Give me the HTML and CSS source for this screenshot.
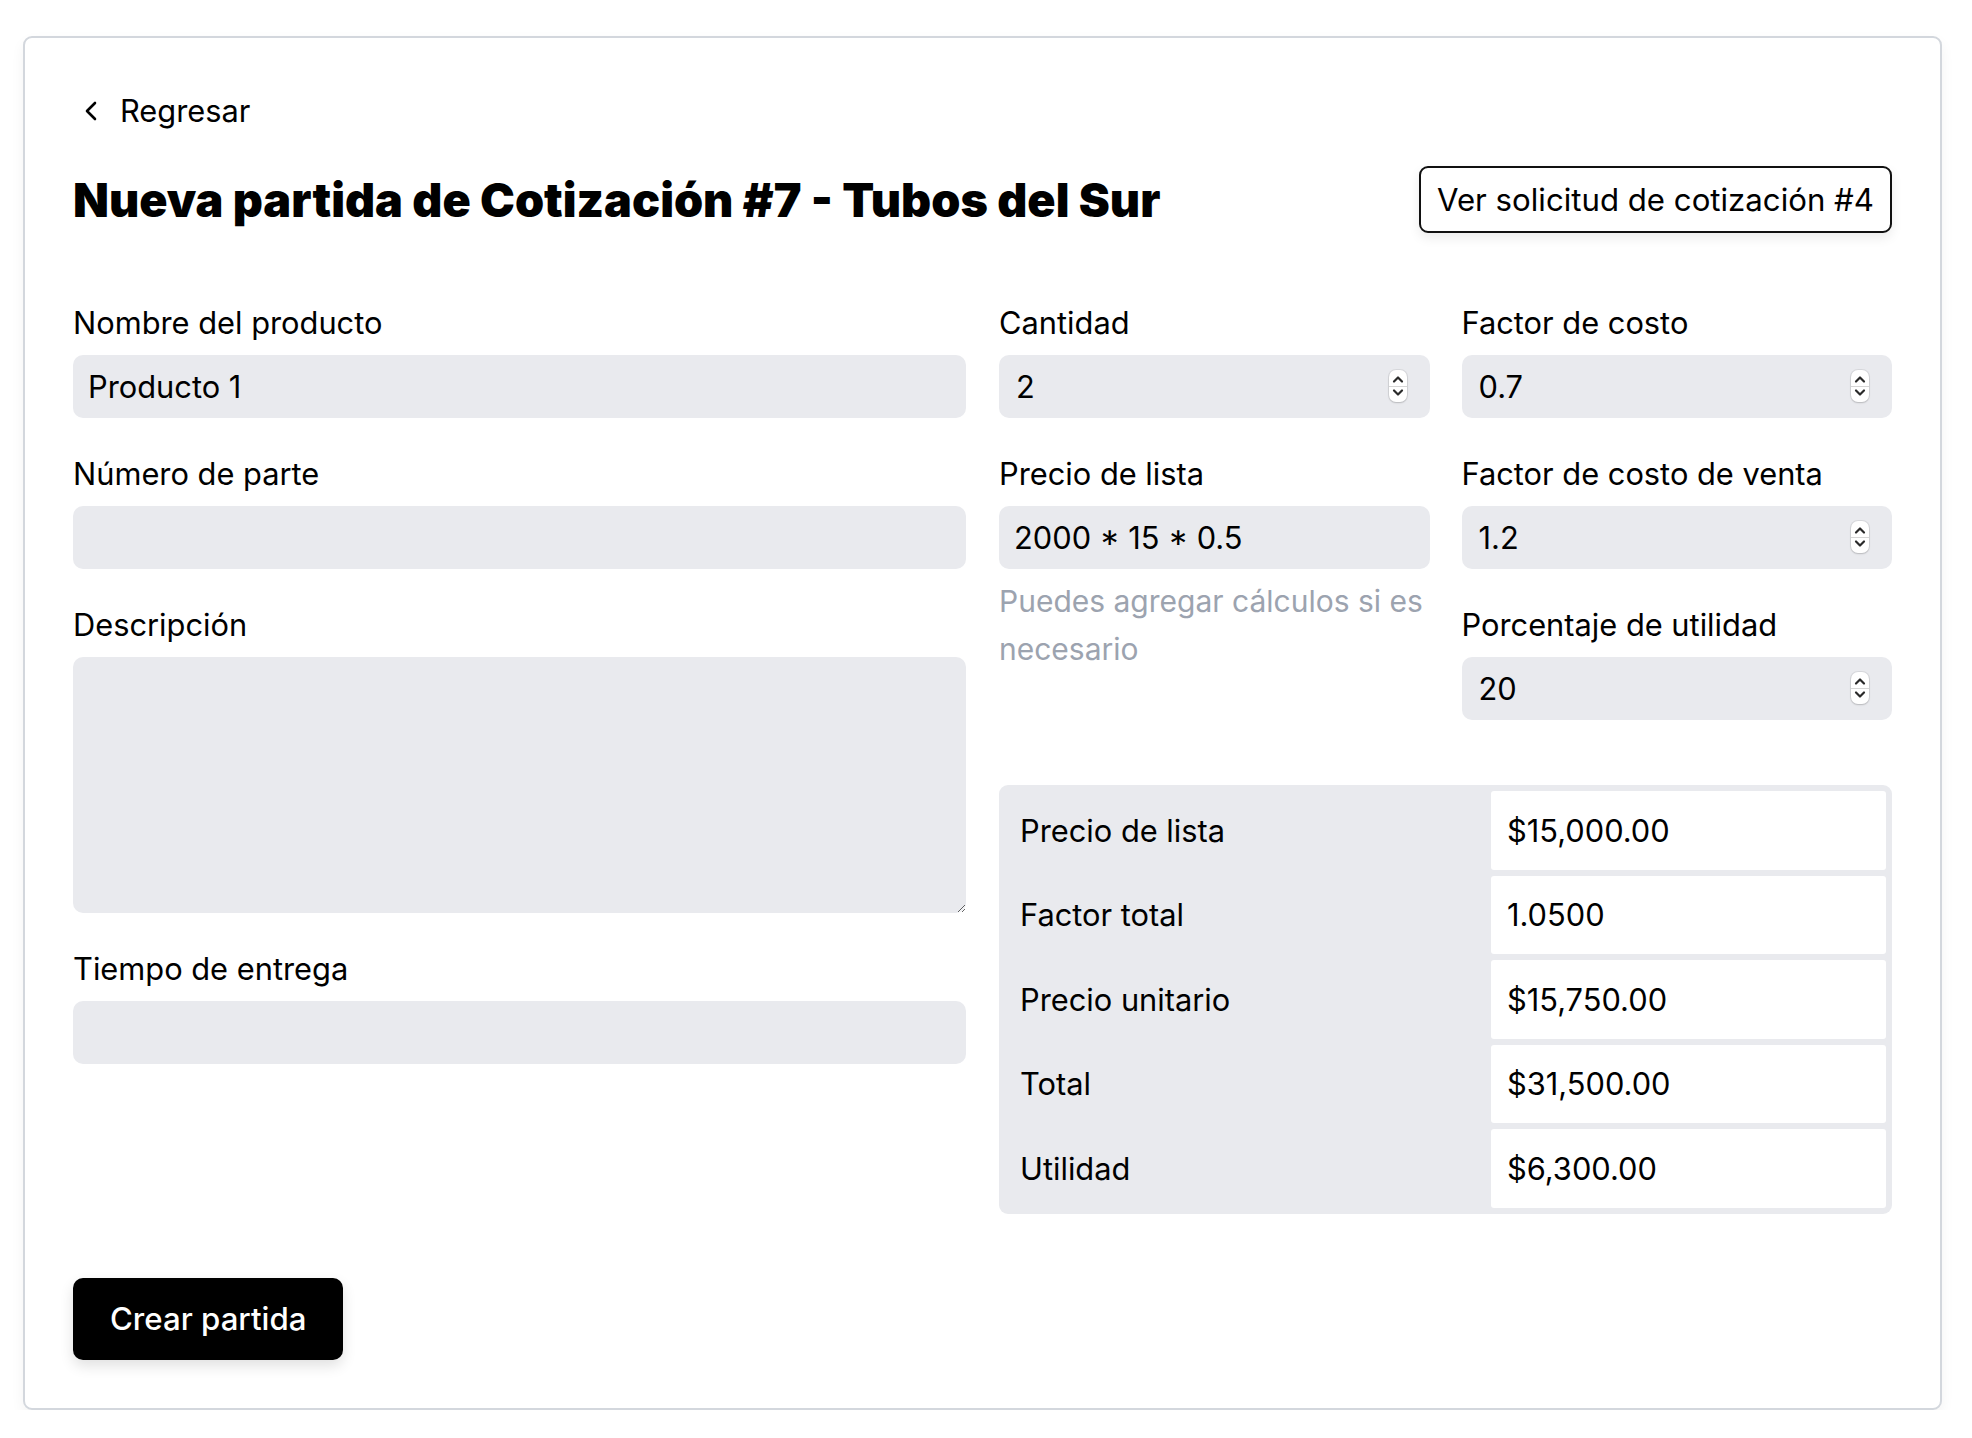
FILE: index.html
```html
<!DOCTYPE html>
<html lang="es">
<head>
<meta charset="utf-8">
<title>Nueva partida</title>
<link rel="stylesheet" href="styles.css">
</head>
<body>
<div class="card">
  <a class="back" href="#">
    <svg class="chev" width="14" height="20" viewBox="0 0 14 20"><path d="M11 2 L3 10 L11 18" fill="none" stroke="#000" stroke-width="2.6" stroke-linecap="round" stroke-linejoin="round"/></svg>
    <span>Regresar</span>
  </a>
  <div class="header">
    <h1 class="title">Nueva partida de Cotización #7 - Tubos del Sur</h1>
    <button class="btn-outline" type="button">Ver solicitud de cotización #4</button>
  </div>

  <div class="grid">
    <div class="col">
      <div class="field">
        <label class="label">Nombre del producto</label>
        <input class="input" type="text" value="Producto 1">
      </div>
      <div class="field">
        <label class="label">Número de parte</label>
        <input class="input" type="text" value="">
      </div>
      <div class="field">
        <label class="label">Descripción</label>
        <textarea class="input textarea"></textarea>
      </div>
      <div class="field">
        <label class="label">Tiempo de entrega</label>
        <input class="input" type="text" value="">
      </div>
    </div>

    <div class="col">
      <div class="subgrid">
        <div class="col">
          <div class="field">
            <label class="label">Cantidad</label>
            <div class="num-wrap">
              <input class="input num" type="number" value="2">
              <span class="spin"><svg width="18" height="32" viewBox="0 0 18 32"><path d="M5 11.5 L9 7.5 L13 11.5" fill="none" stroke="#2a2a2a" stroke-width="2.2" stroke-linecap="round" stroke-linejoin="round"/><path d="M5 20.5 L9 24.5 L13 20.5" fill="none" stroke="#2a2a2a" stroke-width="2.2" stroke-linecap="round" stroke-linejoin="round"/></svg></span>
            </div>
          </div>
          <div class="field">
            <label class="label">Precio de lista</label>
            <input class="input" type="text" value="2000 * 15 * 0.5">
            <p class="help">Puedes agregar cálculos si es necesario</p>
          </div>
        </div>
        <div class="col">
          <div class="field">
            <label class="label">Factor de costo</label>
            <div class="num-wrap">
              <input class="input num" type="number" value="0.7">
              <span class="spin"><svg width="18" height="32" viewBox="0 0 18 32"><path d="M5 11.5 L9 7.5 L13 11.5" fill="none" stroke="#2a2a2a" stroke-width="2.2" stroke-linecap="round" stroke-linejoin="round"/><path d="M5 20.5 L9 24.5 L13 20.5" fill="none" stroke="#2a2a2a" stroke-width="2.2" stroke-linecap="round" stroke-linejoin="round"/></svg></span>
            </div>
          </div>
          <div class="field">
            <label class="label">Factor de costo de venta</label>
            <div class="num-wrap">
              <input class="input num" type="number" value="1.2">
              <span class="spin"><svg width="18" height="32" viewBox="0 0 18 32"><path d="M5 11.5 L9 7.5 L13 11.5" fill="none" stroke="#2a2a2a" stroke-width="2.2" stroke-linecap="round" stroke-linejoin="round"/><path d="M5 20.5 L9 24.5 L13 20.5" fill="none" stroke="#2a2a2a" stroke-width="2.2" stroke-linecap="round" stroke-linejoin="round"/></svg></span>
            </div>
          </div>
          <div class="field">
            <label class="label">Porcentaje de utilidad</label>
            <div class="num-wrap">
              <input class="input num" type="number" value="20">
              <span class="spin"><svg width="18" height="32" viewBox="0 0 18 32"><path d="M5 11.5 L9 7.5 L13 11.5" fill="none" stroke="#2a2a2a" stroke-width="2.2" stroke-linecap="round" stroke-linejoin="round"/><path d="M5 20.5 L9 24.5 L13 20.5" fill="none" stroke="#2a2a2a" stroke-width="2.2" stroke-linecap="round" stroke-linejoin="round"/></svg></span>
            </div>
          </div>
        </div>
      </div>

      <table class="summary">
        <tbody>
          <tr><th>Precio de lista</th><td>$15,000.00</td></tr>
          <tr><th>Factor total</th><td>1.0500</td></tr>
          <tr><th>Precio unitario</th><td>$15,750.00</td></tr>
          <tr><th>Total</th><td>$31,500.00</td></tr>
          <tr><th>Utilidad</th><td>$6,300.00</td></tr>
        </tbody>
      </table>
    </div>
  </div>

  <button class="btn-primary" type="button">Crear partida</button>
</div>
</body>
</html>
```

FILE: styles.css
```css
* { box-sizing: border-box; }

html, body {
  margin: 0;
  background: #ffffff;
}

body {
  padding: 36px 0 0 23px;
  font-family: Inter, "Noto Sans", sans-serif;
  font-size: 30.8px;
  color: #000;
}

.card {
  width: 1919px;
  border: 2px solid #d3d7dd;
  border-radius: 9px;
  padding: 48px;
  background: #fff;
  box-shadow: 0 6px 14px rgba(0, 0, 0, 0.05);
}

.back {
  display: inline-flex;
  align-items: center;
  gap: 22px;
  margin-top: 5px;
  margin-left: 11px;
  height: 40px;
  line-height: 40px;
  color: #000;
  text-decoration: none;
}

.chev { display: block; }

.header {
  display: flex;
  justify-content: space-between;
  align-items: center;
  margin-top: 35px;
  height: 67px;
}

.title {
  margin: 0;
  padding-top: 2px;
  font-size: 46.7px;
  font-weight: 900;
  letter-spacing: 0;
  line-height: 67px;
}

.btn-outline {
  height: 67px;
  padding: 0 16px;
  border: 2px solid #111;
  border-radius: 9px;
  background: #fff;
  font-family: inherit;
  font-size: 31.2px;
  color: #000;
  box-shadow: 0 5px 12px rgba(0, 0, 0, 0.08);
}

.grid {
  display: grid;
  grid-template-columns: 1fr 1fr;
  column-gap: 33px;
  margin-top: 70px;
  align-items: start;
}

.col {
  display: flex;
  flex-direction: column;
  gap: 36px;
}

.subgrid {
  display: grid;
  grid-template-columns: 1fr 1fr;
  column-gap: 32px;
  align-items: start;
}

.field {
  display: flex;
  flex-direction: column;
}

.label {
  display: block;
  line-height: 40px;
  margin-bottom: 12px;
}

.input {
  width: 100%;
  height: 63px;
  border: none;
  border-radius: 10px;
  background: #e9eaee;
  padding: 0 15px;
  font-family: inherit;
  font-size: 30.8px;
  color: #000;
  outline: none;
}

.num { padding-left: 17px; }

.num::-webkit-inner-spin-button,
.num::-webkit-outer-spin-button {
  -webkit-appearance: none;
  margin: 0;
}

.num-wrap { position: relative; }

.spin {
  position: absolute;
  right: 23px;
  top: 15px;
  width: 18px;
  height: 32px;
  border-radius: 7px;
  background: #fff;
  box-shadow: 0 0 0 1px rgba(0, 0, 0, 0.07), 0 1px 2px rgba(0, 0, 0, 0.15);
  display: block;
}

.spin::after {
  content: "";
  position: absolute;
  left: 0;
  right: 0;
  top: 15.5px;
  height: 1px;
  background: #d6d6d6;
}

.spin svg { display: block; }

.textarea {
  height: 256px;
  padding: 12px 15px;
  resize: vertical;
}

.help {
  margin: 8px 0 0;
  font-size: 30px;
  line-height: 48px;
  color: #9ca3af;
}

.summary {
  margin-top: 29px;
  width: 100%;
  background: #e9eaee;
  border-radius: 9px;
  border-collapse: separate;
  border-spacing: 6px;
  table-layout: fixed;
}

.summary th,
.summary td {
  height: 78.5px;
  padding: 0 16px;
  font-weight: 400;
  text-align: left;
}

.summary th { width: 480px; padding-left: 15px; }

.summary td {
  background: #fff;
  border-radius: 3px;
}

.btn-primary {
  display: block;
  margin-top: 64px;
  height: 82px;
  padding: 0 37px;
  border: none;
  border-radius: 10px;
  background: #000;
  color: #fff;
  font-family: inherit;
  font-size: 31.2px;
  font-weight: 500;
  box-shadow: 0 6px 14px rgba(0, 0, 0, 0.12);
}
```
